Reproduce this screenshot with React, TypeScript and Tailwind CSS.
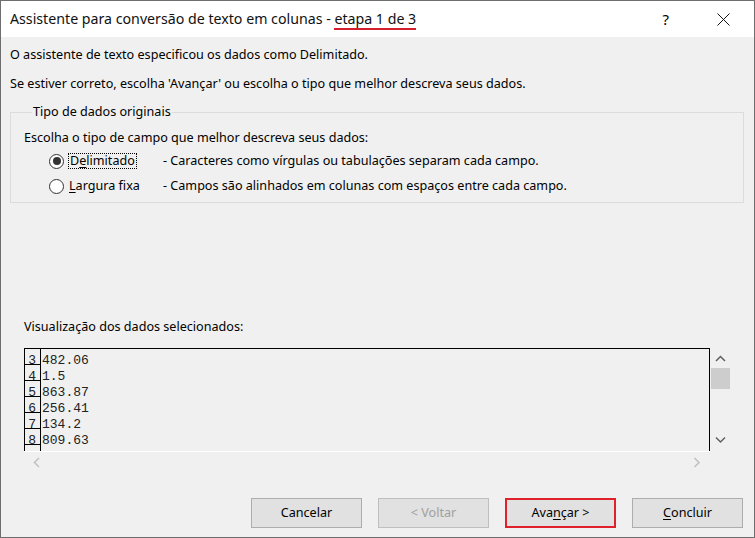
import React from 'react';

const rows = [
  { n: '3', v: '482.06' },
  { n: '4', v: '1.5' },
  { n: '5', v: '863.87' },
  { n: '6', v: '256.41' },
  { n: '7', v: '134.2' },
  { n: '8', v: '809.63' },
  { n: '', v: '' },
];

const Chevron: React.FC<{ dir: 'up' | 'down' | 'left' | 'right'; color: string }> = ({ dir, color }) => {
  const pts = {
    up: '1,6 5.5,1.5 10,6',
    down: '1,1.5 5.5,6 10,1.5',
    left: '6,1 1.5,5.5 6,10',
    right: '1.5,1 6,5.5 1.5,10',
  }[dir];
  const w = dir === 'up' || dir === 'down' ? 11 : 8;
  const h = dir === 'up' || dir === 'down' ? 8 : 11;
  return (
    <svg width={w} height={h} viewBox={`0 0 ${w} ${h}`}>
      <polyline points={pts} fill="none" stroke={color} strokeWidth="1.5" />
    </svg>
  );
};

const Radio: React.FC<{ checked?: boolean }> = ({ checked }) => (
  <span className="w-[15px] h-[15px] rounded-full border border-[#333] bg-white flex items-center justify-center shrink-0">
    {checked && <span className="w-[8px] h-[8px] rounded-full bg-[#333]" />}
  </span>
);

const Button: React.FC<{ children: React.ReactNode; disabled?: boolean; active?: boolean }> = ({ children, disabled, active }) => (
  <div
    className={
      'w-[111px] h-[30px] flex items-center justify-center bg-[#e1e1e1] ' +
      (active
        ? 'border-2 border-[#e0202b] text-black'
        : disabled
          ? 'border border-[#bfbfbf] text-[#a0a0a0]'
          : 'border border-[#adadad] text-black')
    }
  >
    {children}
  </div>
);

const App: React.FC = () => {
  return (
    <div className="w-[755px] h-[538px] border border-[#6e6e6e] bg-[#f0f0f0] flex flex-col overflow-hidden font-['Noto_Sans',sans-serif] text-[12.6px] leading-[16px] text-black">
      {/* title bar */}
      <div className="h-[36px] bg-white flex items-center pl-[9px] shrink-0">
        <span className="text-[14.2px] leading-[20px] text-[#111]">
          Assistente para conversão de texto em colunas -{' '}
          <span className="border-b-2 border-[#d61f2c]">etapa 1 de 3</span>
        </span>
        <span className="ml-auto text-[15px] leading-[20px] mr-[48px]">?</span>
        <svg width="13" height="13" viewBox="0 0 13 13" className="mr-[24px]">
          <path d="M0.5 0.5 L12.5 12.5 M12.5 0.5 L0.5 12.5" stroke="#111" strokeWidth="1" />
        </svg>
      </div>

      {/* wizard body */}
      <p className="mt-[10px] ml-[9px]">O assistente de texto especificou os dados como Delimitado.</p>
      <p className="mt-[13px] ml-[9px]">Se estiver correto, escolha 'Avançar' ou escolha o tipo que melhor descreva seus dados.</p>

      <fieldset className="mt-[12px] ml-[9px] mr-[10px] border border-[#dcdcdc] pl-[13px] pb-[8px]">
        <legend className="ml-[8px] px-[1px]">Tipo de dados originais</legend>
        <p className="mt-[10px]">Escolha o tipo de campo que melhor descreva seus dados:</p>
        <div className="mt-[7px] pl-[25px] flex items-center">
          <Radio checked />
          <span className="ml-[4px] w-[95px]">
            <span className="border border-dotted border-black px-[1px] leading-[14px] inline-block">
              D<span className="underline underline-offset-2">e</span>limitado
            </span>
          </span>
          <span>- Caracteres como vírgulas ou tabulações separam cada campo.</span>
        </div>
        <div className="mt-[9px] pl-[25px] flex items-center">
          <Radio />
          <span className="ml-[5px] w-[94px]">
            <span className="underline underline-offset-2">L</span>argura fixa
          </span>
          <span>- Campos são alinhados em colunas com espaços entre cada campo.</span>
        </div>
      </fieldset>

      <p className="mt-[116px] ml-[23px]">Visualização dos dados selecionados:</p>

      {/* data preview */}
      <div className="mt-[13px] ml-[23px] flex">
        <div className="w-[686px] h-[103px] border-t border-l border-r border-black overflow-hidden font-['Liberation_Mono',monospace] text-[13px] leading-[16px] text-[#222]">
          {rows.map((r, i) => (
            <div key={i} className="flex h-[16px]">
              <div className="w-[16px] border-r border-b border-black text-right pr-[4px] pt-[4px]">{r.n}</div>
              <div className="pt-[4px] pl-[1px]">{r.v}</div>
            </div>
          ))}
        </div>
        <div className="w-[20px] h-[103px] flex flex-col items-center">
          <div className="h-[20px] flex items-center justify-center pt-[1px]">
            <Chevron dir="up" color="#606060" />
          </div>
          <div className="w-[19px] h-[21px] bg-[#cdcdcd] ml-[1px]" />
          <div className="flex-1" />
          <div className="h-[20px] flex items-center justify-center pb-[2px]">
            <Chevron dir="down" color="#606060" />
          </div>
        </div>
      </div>
      <div className="ml-[23px] w-[686px] h-[21px] border-t border-white flex items-center justify-between px-[9px]">
        <Chevron dir="left" color="#c0c0c0" />
        <Chevron dir="right" color="#c0c0c0" />
      </div>

      {/* buttons */}
      <div className="mt-[26px] flex justify-end gap-[16px] pr-[11px]">
        <Button>Cancelar</Button>
        <Button disabled>&lt; Voltar</Button>
        <Button active>
          <span>
            Ava<span className="underline underline-offset-2">n</span>çar &gt;
          </span>
        </Button>
        <Button>
          <span>
            <span className="underline underline-offset-2">C</span>oncluir
          </span>
        </Button>
      </div>
    </div>
  );
};

export default App;
